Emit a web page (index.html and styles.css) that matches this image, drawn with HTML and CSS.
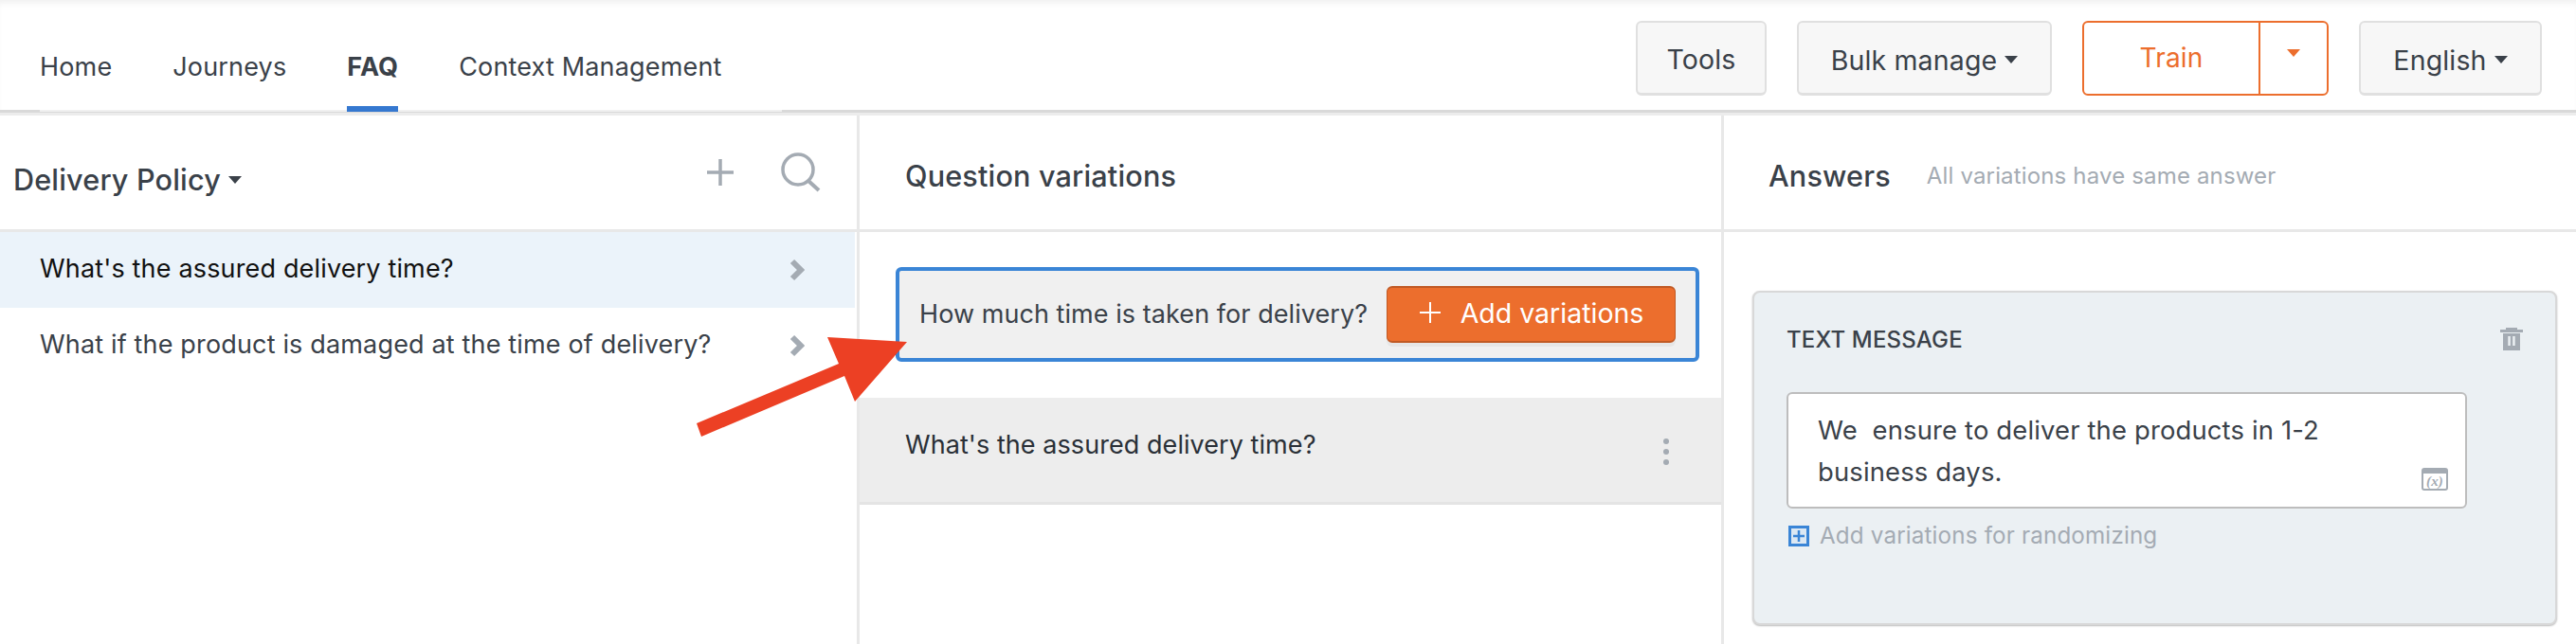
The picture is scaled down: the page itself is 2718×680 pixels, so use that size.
FILE: index.html
```html
<!DOCTYPE html>
<html lang="en">
<head>
  <meta charset="UTF-8">
  <title>FAQ</title>
  <link rel="stylesheet" href="styles.css">
</head>
<body>
  <header class="topbar">
    <nav class="tabs">
      <a class="tab">Home</a>
      <a class="tab">Journeys</a>
      <a class="tab active">FAQ</a>
      <a class="tab">Context Management</a>
    </nav>
    <div class="actions">
      <button class="btn btn-tools">Tools</button>
      <button class="btn btn-bulk">Bulk manage<span class="caret"></span></button>
      <div class="train">
        <span class="train-label">Train</span>
        <span class="train-toggle"><span class="caret caret-orange"></span></span>
      </div>
      <button class="btn btn-lang">English<span class="caret"></span></button>
    </div>
  </header>

  <main class="columns">
    <section class="col col-list">
      <div class="col-head list-head">
        <h2 class="list-title">Delivery Policy<span class="caret"></span></h2>
        <div class="list-tools">
          <svg class="icon-plus" width="28" height="28" viewBox="0 0 28 28"><path d="M14 0v28M0 14h28" stroke="#a4abb3" stroke-width="3.500" fill="none"/></svg>
          <svg class="icon-search" width="44" height="42" viewBox="0 0 44 42"><circle cx="20" cy="18" r="16" stroke="#a4abb3" stroke-width="3.500" fill="none"/><path d="M31 30l11 10" stroke="#a4abb3" stroke-width="4" fill="none"/></svg>
        </div>
      </div>
      <div class="q-row selected">
        <span>What's the assured delivery time?</span>
        <svg class="chevron" width="16" height="24" viewBox="0 0 16 24"><path d="M3 3l9 9-9 9" stroke="#a4abb3" stroke-width="6" fill="none"/></svg>
      </div>
      <div class="q-row">
        <span>What if the product is damaged at the time of delivery?</span>
        <svg class="chevron" width="16" height="24" viewBox="0 0 16 24"><path d="M3 3l9 9-9 9" stroke="#a4abb3" stroke-width="6" fill="none"/></svg>
      </div>
    </section>

    <section class="col col-vars">
      <div class="col-head">
        <h2 class="col-title">Question variations</h2>
      </div>
      <div class="var-input">
        <span class="var-text">How much time is taken for delivery?</span>
        <button class="add-btn">
          <svg width="24" height="24" viewBox="0 0 24 24"><path d="M12 1v22M1 12h22" stroke="#fff" stroke-width="2" fill="none"/></svg>
          Add variations
        </button>
      </div>
      <div class="var-row">
        <span>What's the assured delivery time?</span>
        <span class="dots"><i></i><i></i><i></i></span>
      </div>
    </section>

    <section class="col col-answers">
      <div class="col-head">
        <h2 class="col-title">Answers</h2>
        <span class="col-note">All variations have same answer</span>
      </div>
      <div class="card">
        <div class="card-head">
          <span class="card-title">TEXT MESSAGE</span>
          <svg width="24" height="24" viewBox="0 0 24 24"><path fill="#a4abb3" fill-rule="evenodd" d="M6 0h12v2h6v3H0V2h6zM3 6h18v18H3zM8.300 9v10h2.500V9zM13.200 9v10h2.500V9z"/></svg>
        </div>
        <div class="msg-box">
          <p class="msg-text">We &nbsp;ensure to deliver the products in 1-2 business days.</p>
          <svg class="var-icon" width="28" height="24" viewBox="0 0 28 24"><rect x="1" y="1" width="26" height="22" rx="2" fill="#fff" stroke="#a4abb3" stroke-width="2"/><rect x="1" y="1" width="26" height="5" fill="#a4abb3"/><text x="14" y="19" text-anchor="middle" class="var-icon-text">(x)</text></svg>
        </div>
        <div class="add-random">
          <svg width="22" height="22" viewBox="0 0 22 22"><rect x="1.500" y="1.500" width="19" height="19" fill="#dce8f3" stroke="#3a85d6" stroke-width="3"/><path d="M11 5v12M5 11h12" stroke="#3a85d6" stroke-width="2.500" fill="none"/></svg>
          <span>Add variations for randomizing</span>
        </div>
      </div>
    </section>
  </main>

  <svg class="arrow" width="240" height="120" viewBox="0 0 240 120">
    <path fill="#ec4024" d="M2 91L7 105 158 41 169 68 224 5 140 0 152 28z"/>
  </svg>
</body>
</html>
```

FILE: styles.css
```css
* {
  box-sizing: border-box;
}

html, body {
  height: 100%;
}

body {
  margin: 0;
  font-family: 'Inter', 'Liberation Sans', sans-serif;
  font-size: 27px;
  letter-spacing: 0.16px;
  color: #3a4149;
  background: #fff;
  overflow: hidden;
  position: relative;
}

/* top bar */
.topbar {
  height: 119px;
  margin-bottom: 3px;
  padding: 6px 36px 0 42px;
  display: flex;
  justify-content: space-between;
  border-bottom: 3px solid #d9d9d9;
  box-shadow: inset 0 6px 6px -3px #f0f0f0, 0 3px 0 #ececec;
}

.tabs {
  display: flex;
  gap: 64px;
  width: 783px;
  height: 112px;
  border-bottom: 2px solid #f0f0f0;
}

.tab {
  line-height: 130px;
  height: 112px;
}

.tab.active {
  font-weight: 700;
  border-bottom: 6px solid #3578d0;
}

.actions {
  display: flex;
  gap: 32px;
  padding-top: 16px;
}

.btn {
  height: 79px;
  background: #f7f7f7;
  border: 2px solid #e0e0e0;
  border-bottom-width: 3px;
  border-radius: 6px;
  font: inherit;
  font-size: 28.500px;
  letter-spacing: inherit;
  color: inherit;
  padding: 4px 0 0;
}

.btn-tools {
  width: 138px;
  padding-top: 2px;
}

.btn-bulk { width: 269px; }
.btn-lang { width: 193px; }

.caret {
  display: inline-block;
  margin-left: 8px;
  vertical-align: 7px;
  border-top: 8px solid #3a4149;
  border-left: 7px solid transparent;
  border-right: 7px solid transparent;
}

.caret-orange {
  border-top-color: #ec6e2d;
  margin: 0;
}

.train {
  width: 260px;
  height: 79px;
  display: flex;
  border: 2px solid #ec6e2d;
  border-radius: 6px;
  font-size: 28px;
  color: #ec6e2d;
}

.train-label {
  flex: 1;
  text-align: center;
  line-height: 74px;
}

.train-toggle {
  width: 72px;
  border-left: 2px solid #ec6e2d;
  text-align: center;
  line-height: 66px;
}

/* three columns */
.columns {
  display: grid;
  grid-template-columns: 907px 912px 1fr;
  height: 558px;
}

.col-list, .col-vars {
  border-right: 3px solid #e8e8e8;
}

.col-head {
  height: 123px;
  display: flex;
  align-items: center;
  border-bottom: 3px solid #e8e8e8;
  padding: 7px 0 0 48px;
}

.col-title {
  margin: 0;
  font-size: 30.600px;
  font-weight: 500;
}

.col-answers .col-head {
  padding-left: 47px;
  gap: 38px;
}

.col-note {
  font-size: 24px;
  color: #a4abb3;
}

.list-head {
  justify-content: space-between;
  padding: 0 38px 0 14px;
}

.list-title {
  margin: 14px 0 0;
  font-size: 30.600px;
  font-weight: 500;
}

.list-tools {
  display: flex;
  align-items: center;
  gap: 48px;
}

.q-row {
  height: 80px;
  margin-right: 2px;
  padding: 0 53px 0 42px;
  display: flex;
  align-items: center;
  justify-content: space-between;
}

.q-row span {
  padding-bottom: 4px;
}

.q-row.selected {
  background: #ebf3fa;
  color: #111;
}

.var-input {
  margin: 37px 23px 38px 38px;
  height: 100px;
  display: flex;
  align-items: center;
  justify-content: space-between;
  padding: 0 21px 0 21px;
  background: #f0f0f0;
  border: 4px solid #3a85d6;
  border-radius: 6px;
}

.var-text {
  padding-bottom: 2px;
  letter-spacing: 0.06px;
}

.add-btn {
  width: 305px;
  height: 60px;
  display: flex;
  align-items: center;
  justify-content: center;
  gap: 20px;
  padding: 0 0 4px;
  background: #ec6e2d;
  color: #fff;
  border: 1px solid #c05a25;
  border-top-width: 2px;
  border-bottom-width: 2px;
  border-radius: 6px;
  font: inherit;
  font-size: 28.500px;
  box-shadow: 0 4px 0 #e6e6e6;
}

.var-row {
  height: 113px;
  padding: 0 55px 12px 48px;
  display: flex;
  align-items: center;
  justify-content: space-between;
  background: #ededed;
  border-bottom: 3px solid #e4e4e4;
  letter-spacing: 0.06px;
  color: #2a3037;
}

.dots {
  display: flex;
  flex-direction: column;
  gap: 5px;
  margin-top: 16px;
}

.dots i {
  width: 6px;
  height: 6px;
  border-radius: 50%;
  background: #a4abb3;
}

/* answer card */
.card {
  margin: 62px 20px 0 30px;
  height: 353px;
  padding: 29px 34px;
  background: #ebf0f3;
  border: 2px solid #d8d8d8;
  border-radius: 8px;
  box-shadow: 0 1px 2px #bbb;
}

.card-head {
  display: flex;
  align-items: center;
  justify-content: space-between;
  height: 40px;
  font-size: 24px;
  font-weight: 500;
}

.msg-box {
  position: relative;
  width: 718px;
  height: 123px;
  margin-top: 36px;
  padding: 16px 31px;
  background: #fff;
  border: 2px solid #bdbdbd;
  border-radius: 6px;
}

.msg-text {
  margin: 0;
  width: 620px;
  font-size: 27.400px;
  line-height: 44px;
  color: #3a4149;
}

.var-icon {
  position: absolute;
  right: 18px;
  bottom: 17px;
}

.var-icon-text {
  font-family: 'Liberation Serif', serif;
  font-size: 15px;
  font-style: italic;
  font-weight: 700;
  fill: #a4abb3;
}

.add-random {
  display: flex;
  align-items: center;
  gap: 11px;
  margin: 14px 0 0 2px;
  font-size: 24.200px;
  color: #a4abb3;
}

/* annotation arrow over the page */
.arrow {
  position: absolute;
  left: 733px;
  top: 356px;
}
```
